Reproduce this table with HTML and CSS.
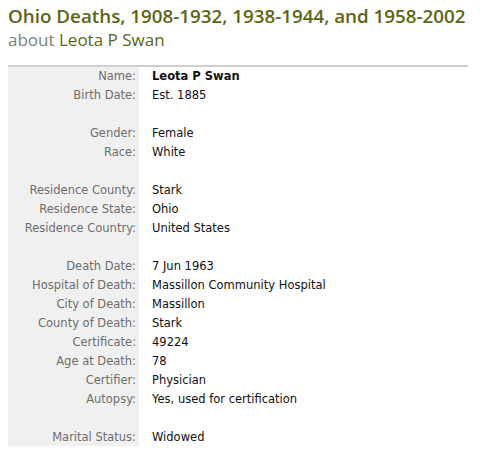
FILE: index.html
```html
<!DOCTYPE html>
<html>
<head>
<meta charset="utf-8">
<link rel="stylesheet" href="styles.css">
</head>
<body>
<div class="page">
  <h1 class="title">Ohio Deaths, 1908-1932, 1938-1944, and 1958-2002</h1>
  <h2 class="subtitle"><span class="about">about</span> Leota P Swan</h2>
  <table class="record">
    <tr><th>Name:</th><td class="name">Leota P Swan</td></tr>
    <tr><th>Birth Date:</th><td>Est. 1885</td></tr>
    <tr class="gap"><th></th><td></td></tr>
    <tr><th>Gender:</th><td>Female</td></tr>
    <tr><th>Race:</th><td>White</td></tr>
    <tr class="gap"><th></th><td></td></tr>
    <tr><th>Residence County:</th><td>Stark</td></tr>
    <tr><th>Residence State:</th><td>Ohio</td></tr>
    <tr><th>Residence Country:</th><td>United States</td></tr>
    <tr class="gap"><th></th><td></td></tr>
    <tr><th>Death Date:</th><td>7 Jun 1963</td></tr>
    <tr><th>Hospital of Death:</th><td>Massillon Community Hospital</td></tr>
    <tr><th>City of Death:</th><td>Massillon</td></tr>
    <tr><th>County of Death:</th><td>Stark</td></tr>
    <tr><th>Certificate:</th><td>49224</td></tr>
    <tr><th>Age at Death:</th><td>78</td></tr>
    <tr><th>Certifier:</th><td>Physician</td></tr>
    <tr><th>Autopsy:</th><td>Yes, used for certification</td></tr>
    <tr class="gap"><th></th><td></td></tr>
    <tr><th>Marital Status:</th><td>Widowed</td></tr>
  </table>
</div>
</body>
</html>
```
FILE: styles.css
```css
html, body { margin: 0; padding: 0; background: #fff; }
.page { padding: 4px 8px 0 8px; width: 460px; }
.title {
  margin: 0;
  font-family: "Open Sans", "DejaVu Sans", sans-serif;
  font-weight: 600;
  font-size: 18.8px;
  line-height: 24px;
  color: #5b6614;
  white-space: nowrap;
}
.subtitle {
  margin: 0;
  font-family: "Open Sans", "DejaVu Sans", sans-serif;
  font-weight: 400;
  font-size: 17px;
  line-height: 24px;
  color: #5b6614;
}
.about { color: #808080; }
.record {
  margin-top: 13px;
  width: 460px;
  border-collapse: collapse;
  border-top: 2px solid #cfcfcf;
  font-family: "DejaVu Sans", sans-serif;
  font-size: 11.5px;
}
.record tr { height: 19px; }
.record th {
  width: 116px;
  background: #f0f0f0;
  color: #6e6e6e;
  font-weight: normal;
  text-align: right;
  padding: 0 3px 0 12px;
  white-space: nowrap;
}
.record td {
  color: #111;
  padding: 0 0 0 13px;
}
.record td.name { font-weight: bold; }
```
